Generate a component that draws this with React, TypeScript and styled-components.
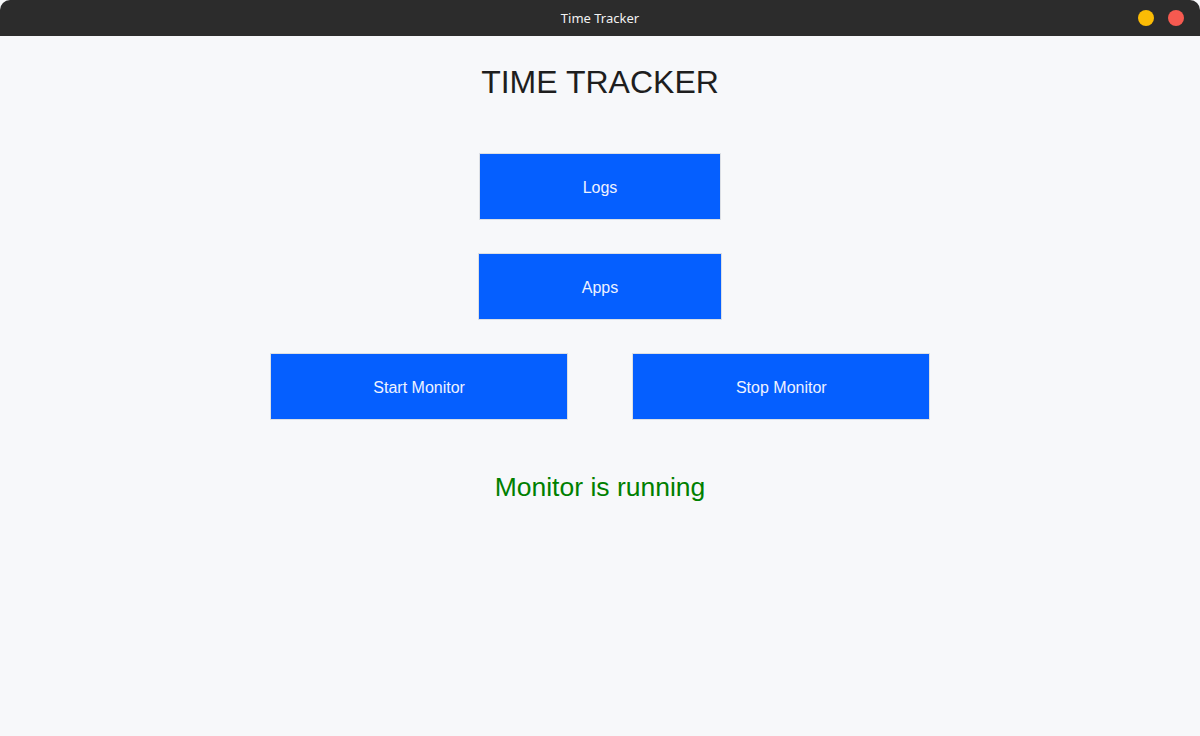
import React from "react";
import styled, { createGlobalStyle } from "styled-components";

const Global = createGlobalStyle`
  html, body { margin: 0; padding: 0; background: #f7f8fa; }
  body { font-family: "Liberation Sans", Arial, sans-serif; }
  #root { height: 736px; }
`;

const Window = styled.div`
  width: 1200px;
  height: 736px;
  display: flex;
  flex-direction: column;
  background: #f7f8fa;
  overflow: hidden;
`;

const TitleBar = styled.div`
  height: 36px;
  flex: none;
  background: #2c2c2c;
  border-radius: 10px 10px 0 0;
  display: flex;
  align-items: center;
  justify-content: center;
  position: relative;
`;

const TitleText = styled.span`
  color: #f2f2f2;
  font-family: "Noto Sans", "DejaVu Sans", sans-serif;
  font-size: 13px;
`;

const Controls = styled.div`
  position: absolute;
  right: 16px;
  top: 10px;
  display: flex;
  gap: 14px;
`;

const Dot = styled.span<{ $color: string }>`
  width: 16px;
  height: 16px;
  border-radius: 50%;
  background: ${(p) => p.$color};
`;

const Content = styled.main`
  flex: 1;
  display: flex;
  flex-direction: column;
  align-items: center;
  padding-top: 28px;
`;

const Heading = styled.h1`
  margin: 0;
  font-size: 32px;
  font-weight: 400;
  color: #1e1e1e;
  line-height: 37px;
`;

const Stack = styled.div`
  display: flex;
  flex-direction: column;
  align-items: center;
  gap: 33px;
  margin-top: 52px;
`;

const Row = styled.div`
  display: flex;
  gap: 64px;
`;

const Button = styled.button`
  box-sizing: border-box;
  height: 67px;
  padding: 2px 102.5px 0;
  background: #055fff;
  color: #eef2ff;
  border: 1px solid #dcdfe4;
  font-family: "Liberation Sans", Arial, sans-serif;
  font-size: 16px;
  cursor: pointer;
`;

const Status = styled.p`
  margin: 52px 0 0;
  font-size: 26.5px;
  line-height: 30px;
  color: #008000;
`;

export default function App() {
  return (
    <>
      <Global />
      <Window>
        <TitleBar>
          <TitleText>Time Tracker</TitleText>
          <Controls>
            <Dot $color="#fbbc05" />
            <Dot $color="#f65a50" />
          </Controls>
        </TitleBar>
        <Content>
          <Heading>TIME TRACKER</Heading>
          <Stack>
            <Button>Logs</Button>
            <Button>Apps</Button>
            <Row>
              <Button>Start Monitor</Button>
              <Button>Stop Monitor</Button>
            </Row>
          </Stack>
          <Status>Monitor is running</Status>
        </Content>
      </Window>
    </>
  );
}
